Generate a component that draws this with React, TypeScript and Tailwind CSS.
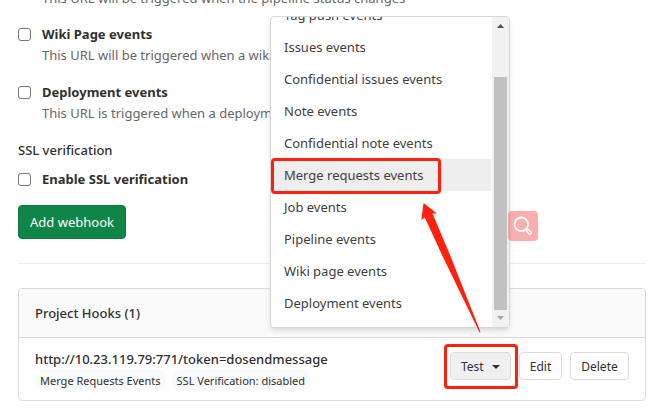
import React from "react";

const menuEvents = [
  "Tag push events",
  "Issues events",
  "Confidential issues events",
  "Note events",
  "Confidential note events",
  "Merge requests events",
  "Job events",
  "Pipeline events",
  "Wiki page events",
  "Deployment events",
];

function Tick({ id }: { id: string }) {
  return (
    <input
      id={id}
      type="checkbox"
      className="size-[13px] shrink-0 appearance-none rounded-[3px] border border-[#767676] bg-white checked:bg-[#1068bf]"
    />
  );
}

function EventOption({ id, title, help }: { id: string; title: string; help: string }) {
  return (
    <div className="mb-[18px]">
      <div className="flex h-5 items-center gap-[11px]">
        <Tick id={id} />
        <label htmlFor={id} className="leading-5 font-bold whitespace-nowrap">
          {title}
        </label>
      </div>
      <p className="ml-6 h-5 leading-[22px] whitespace-nowrap text-[#666]">{help}</p>
    </div>
  );
}

function TestMenu() {
  return (
    <div className="absolute right-px bottom-full mb-6 flex h-[312px] w-60 rounded border border-[#d6d6d6] bg-white text-[#404040] shadow-md">
      <div className="flex flex-1 flex-col justify-end overflow-hidden pb-2">
        {menuEvents.map((name) => (
          <button
            key={name}
            type="button"
            className={
              name === "Merge requests events"
                ? "relative mr-px h-8 shrink-0 bg-[#eee] pt-0.5 pl-[13px] text-left"
                : "relative mr-px h-8 shrink-0 pt-0.5 pl-[13px] text-left"
            }
          >
            {name}
            {name === "Merge requests events" && (
              <span className="absolute -top-px left-0 h-9 w-[170px] rounded border-3 border-[#ff2010]" />
            )}
          </button>
        ))}
      </div>
      <div className="flex w-[17px] flex-col items-center rounded-r bg-[#f1f1f1]">
        <svg className="mt-[7px] h-1 w-[7px]" viewBox="0 0 7 4" fill="#505050">
          <path d="M0 4 3.5 0 7 4Z" />
        </svg>
        <span className="mt-[49px] w-[13px] flex-1 bg-[#c1c1c1]" />
        <svg className="mt-1.5 mb-[7px] h-1 w-[7px]" viewBox="0 0 7 4" fill="#a3a3a3">
          <path d="M0 0 3.5 4 7 0Z" />
        </svg>
      </div>
      <svg className="pointer-events-none absolute top-[186px] left-[149px] h-[130px] w-[62px]" viewBox="0 0 62 130" fill="#ff2010">
        <path d="M3.500 0 17 10.500 12.500 10.500 30 52 60.500 129 59.500 129.500 22 52 4.800 14.500 1.300 17Z" />
      </svg>
    </div>
  );
}

export default function App() {
  return (
    <div className="h-screen overflow-hidden bg-white pr-[25px] pl-[18px] font-['Noto_Sans','Open_Sans',sans-serif] text-[13px] text-[#303030]">
      <p className="-mt-[13px] mb-[17px] ml-6 h-5 leading-[22px] whitespace-nowrap text-[#666]">
        This URL will be triggered when the pipeline status changes
      </p>
      <EventOption id="wiki" title="Wiki Page events" help="This URL will be triggered when a wiki page is created/updated" />
      <EventOption id="deploy" title="Deployment events" help="This URL is triggered when a deployment is finished" />
      <h2 className="h-5 leading-5 font-medium">SSL verification</h2>
      <div className="mt-[9px] flex h-5 items-center gap-[11px]">
        <Tick id="ssl" />
        <label htmlFor="ssl" className="leading-5 font-bold">
          Enable SSL verification
        </label>
      </div>
      <div className="mt-4 flex items-start justify-between">
        <button type="button" className="h-[34px] w-[108px] rounded border border-[#0e7a40] bg-[#108548] pt-0.5 text-white">
          Add webhook
        </button>
        <button
          type="button"
          aria-label="Search"
          className="relative z-10 mt-1.5 mr-[108px] flex size-[30px] items-center justify-center rounded bg-[#f55f5f]/50"
        >
          <svg className="size-5" viewBox="0 0 20 20" fill="none" stroke="white" strokeWidth="1.800">
            <circle cx="8.300" cy="8.300" r="6.800" />
            <path d="m13.200 13.200 1.200 1.200" />
            <path d="m14.800 14.800 2.200 2.200" strokeWidth="4" strokeLinecap="round" />
            <path d="m15 15 2 2" stroke="#faafaf" strokeWidth="1.200" strokeLinecap="round" />
          </svg>
        </button>
      </div>
      <hr className="mt-[22px] border-[#eee]" />
      <section className="mt-6 rounded border border-[#dbdbdb]">
        <h3 className="flex h-12 items-center rounded-t bg-[#fafafa] px-4 pt-0.5 font-medium">Project Hooks (1)</h3>
        <div className="flex h-[63px] items-start justify-between border-t border-[#dbdbdb] pr-4 pl-4">
          <div className="pt-3">
            <p className="h-5 leading-[18px] font-medium">http://10.23.119.79:771/token=dosendmessage</p>
            <div className="flex gap-1.5 text-[11px]">
              <span className="h-5 rounded-lg bg-[#f9fafc] px-[5px] leading-[22px]">Merge Requests Events</span>
              <span className="h-5 rounded-lg bg-[#f9fafc] px-[5px] leading-[22px]">SSL Verification: disabled</span>
            </div>
          </div>
          <div className="flex gap-2 pt-3.5 text-xs">
            <div className="relative">
              <button
                type="button"
                className="flex h-7 w-[61px] items-center gap-2 rounded border border-[#dbdbdb] bg-[#f0f0f0] pt-0.5 pl-2.5"
              >
                Test
                <svg className="h-1 w-2" viewBox="0 0 8 4" fill="#303030">
                  <path d="M0 0h8L4 4Z" />
                </svg>
              </button>
              <span className="pointer-events-none absolute -top-2 -left-1.5 h-[45px] w-[74px] rounded border-3 border-[#ff2010]" />
              <div className="text-[13px]">
                <TestMenu />
              </div>
            </div>
            <button type="button" className="h-7 w-[43px] rounded border border-[#dbdbdb] bg-white pt-0.5">
              Edit
            </button>
            <button type="button" className="h-7 w-[59px] rounded border border-[#dbdbdb] bg-white pt-0.5">
              Delete
            </button>
          </div>
        </div>
      </section>
    </div>
  );
}
